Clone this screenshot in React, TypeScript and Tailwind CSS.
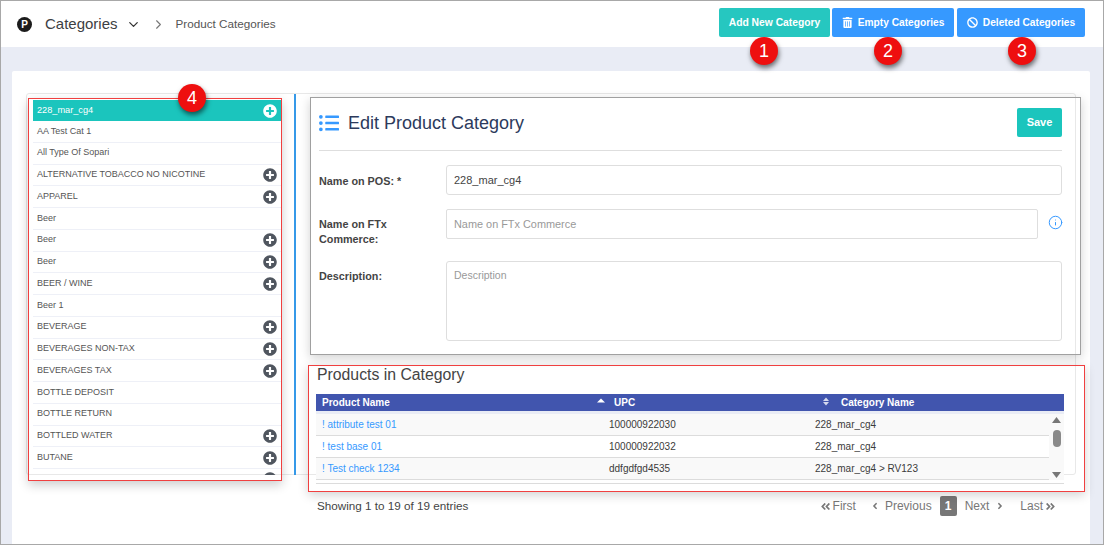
import { ChevronDown, ChevronRight, Info } from "lucide-react";
import { FaAngleDoubleLeft, FaAngleDoubleRight, FaAngleLeft, FaAngleRight, FaBan, FaListUl, FaPlusCircle, FaTrashAlt } from "react-icons/fa";

const cats: [string, boolean][] = [
  ["AA Test Cat 1", false],
  ["All Type Of Sopari", false],
  ["ALTERNATIVE TOBACCO NO NICOTINE", true],
  ["APPAREL", true],
  ["Beer", false],
  ["Beer", true],
  ["Beer", true],
  ["BEER / WINE", true],
  ["Beer 1", false],
  ["BEVERAGE", true],
  ["BEVERAGES NON-TAX", true],
  ["BEVERAGES TAX", true],
  ["BOTTLE DEPOSIT", false],
  ["BOTTLE RETURN", false],
  ["BOTTLED WATER", true],
  ["BUTANE", true],
  ["", true],
];

const rows = [
  ["! attribute test 01", "100000922030", "228_mar_cg4"],
  ["! test base 01", "100000922032", "228_mar_cg4"],
  ["! Test check 1234", "ddfgdfgd4535", "228_mar_cg4 > RV123"],
];

function Badge({ n, className }: { n: string; className: string }) {
  return (
    <div className={`absolute w-[28px] h-[28px] rounded-full bg-[#ee0f0f] text-white text-[18px] leading-[28px] text-center shadow-[1px_3px_5px_rgba(0,0,0,0.55)] ${className}`}>
      {n}
    </div>
  );
}

export default function App() {
  return (
    <div className="relative w-[1104px] h-[545px] overflow-hidden bg-[#e9ecf5] border border-[#a8a8a8] flex flex-col text-[#555] font-[family-name:Liberation_Sans,Arial,sans-serif]">
      {/* header */}
      <header className="h-[46px] shrink-0 bg-white flex items-center pl-[16px] pr-[18px]">
        <div className="w-[15px] h-[15px] rounded-full bg-[#1c1c1c] text-white text-[10px] font-bold leading-[15px] text-center">P</div>
        <span className="ml-[13px] text-[15px] text-[#3d4043]">Categories</span>
        <ChevronDown size={15} strokeWidth={2} className="ml-[8px] text-[#333]" />
        <ChevronRight size={15} strokeWidth={1.8} className="ml-[10px] text-[#777]" />
        <span className="ml-[10px] text-[11.7px] text-[#555]">Product Categories</span>
        <div className="ml-auto flex gap-[2px] -mt-[3px]">
          <button className="h-[29px] w-[111px] rounded-[2px] bg-[#1bc5bd] text-white text-[10.3px] font-bold opacity-95">Add New Category</button>
          <button className="h-[29px] w-[122px] rounded-[2px] bg-[#3699ff] text-white text-[10.2px] font-bold flex items-center justify-center gap-[5px]">
            <FaTrashAlt size={11} />Empty Categories
          </button>
          <button className="ml-[1px] h-[29px] w-[128px] rounded-[2px] bg-[#3699ff] text-white text-[10.2px] font-bold flex items-center justify-center gap-[5px]">
            <FaBan size={11} />Deleted Categories
          </button>
        </div>
      </header>

      {/* card */}
      <main className="mt-[24px] ml-[11px] w-[1078px] flex-1 bg-white rounded-t-[2px] pt-[22px] pl-[14px]">
        <div className="h-[382px] w-[1050px] border border-[#e8e8e8] rounded-[3px] flex">
          {/* category list */}
          <div className="w-[267px] h-[381px] shrink-0 pl-[6px] pt-[6px] overflow-hidden">
            <div className="w-[248px] h-[375px] overflow-hidden text-[9px] text-[#555]">
              <div className="h-[21px] bg-[#1bc5bd] text-white flex items-center justify-between pl-[4px] pr-[4px] text-[9.2px]">
                <span>228_mar_cg4</span>
                <FaPlusCircle size={14} className="text-white" />
              </div>
              {cats.map(([name, plus], i) => (
                <div key={i} className="h-[21.75px] border-b border-[#eef0f7] flex items-center justify-between pl-[4px] pr-[4px]">
                  <span>{name}</span>
                  {plus && <FaPlusCircle size={14} className="text-[#50565f]" />}
                </div>
              ))}
            </div>
          </div>
          <div className="w-[2px] h-[381px] shrink-0 bg-[#3699e8]" />

          {/* right column */}
          <div className="ml-[14px] w-[767px] shrink-0">
            <div className="h-[261px] pl-[9px] pt-[14px] pr-[15px]">
              <div className="flex items-start justify-between h-[43px] border-b border-[#dedede]">
                <div className="flex items-center gap-[9px] h-[30px]">
                  <FaListUl size={20} className="text-[#3699ff]" />
                  <span className="text-[18px] text-[#2c3a5c]">Edit Product Category</span>
                </div>
                <button className="h-[29px] w-[45px] rounded-[2px] bg-[#1bc5bd] text-white text-[11px] font-bold">Save</button>
              </div>
              <div className="mt-[14px] flex">
                <label className="w-[127px] pt-[8px] text-[10.8px] font-bold text-[#444]">Name on POS: *</label>
                <input readOnly value="228_mar_cg4" className="w-[616px] h-[30px] border border-[#dedede] rounded-[3px] px-[7px] text-[11px] text-[#444] outline-none" />
              </div>
              <div className="mt-[14px] h-[38px] flex">
                <label className="w-[127px] shrink-0 pt-[8px] text-[10.8px] leading-[15px] font-bold text-[#444]">Name on FTx<br />Commerce:</label>
                <input readOnly placeholder="Name on FTx Commerce" className="w-[592px] shrink-0 h-[30px] border border-[#dedede] rounded-[2px] px-[7px] text-[10.9px] placeholder:text-[#999] outline-none" />
                <Info size={15} strokeWidth={1.6} className="shrink-0 ml-[10px] mt-[6px] text-[#3699ff]" />
              </div>
              <div className="mt-[14px] flex">
                <label className="w-[127px] pt-[7px] text-[10.8px] font-bold text-[#444]">Description:</label>
                <textarea readOnly placeholder="Description" className="w-[616px] h-[80px] border border-[#dedede] rounded-[3px] px-[7px] py-[6px] text-[10.5px] placeholder:text-[#999] outline-none resize-none" />
              </div>
            </div>

            <h2 className="mt-[10px] ml-[7px] text-[15.8px] leading-[20px] text-[#444]">Products in Category</h2>
            <div className="mt-[9px] ml-[6px] w-[748px]">
              <div className="h-[17px] bg-[#4155ae] text-white text-[10px] font-bold flex items-center">
                <div className="w-[287px] pl-[6px] relative">
                  Product Name
                  <svg width="8" height="5" viewBox="0 0 8 5" className="absolute right-[-2px] top-[3px]"><path d="M0 4.5 4 0.5 8 4.5Z" fill="#fff" /></svg>
                </div>
                <div className="w-[220px] pl-[11px] relative">
                  UPC
                  <svg width="6" height="9" viewBox="0 0 6 9" className="absolute right-[-6px] top-[2px]"><path d="M0 4 3 0.5 6 4Z M0 5 3 8.5 6 5Z" fill="#d5d9ee" /></svg>
                </div>
                <div className="pl-[18px]">Category Name</div>
              </div>
              <div className="relative text-[10px] border-t-[3px] border-[#e9ecf5]">
                {rows.map((r, i) => (
                  <div key={i} className={`h-[22px] flex items-center border-b border-[#dcdcdc] ${i === 1 ? "bg-white pb-[1px]" : i === 0 ? "bg-[#f9f9f9] pb-[1px]" : "bg-[#f9f9f9]"}`}>
                    <div className="w-[293px] pl-[6px] text-[#3699ff]">{r[0]}</div>
                    <div className="w-[206px] pl-[0px] text-[#3b3b3b]">{r[1]}</div>
                    <div className="text-[#3b3b3b]">{r[2]}</div>
                  </div>
                ))}
                <div className="h-[4px] border-b border-[#dcdcdc]" />
                <div className="absolute right-0 top-0 w-[15px] h-[66px] bg-[#f9f9f9] flex flex-col items-center pt-[3px]">
                  <svg width="9" height="6" viewBox="0 0 9 6"><path d="M0 6 4.5 0 9 6Z" fill="#777" /></svg>
                  <div className="mt-[7px] w-[8px] h-[17px] rounded-full bg-[#8a8a8a]" />
                  <svg width="9" height="6" viewBox="0 0 9 6" className="mt-[25px]"><path d="M0 0 4.5 6 9 0Z" fill="#777" /></svg>
                </div>
              </div>
              <div className="mt-[12px] flex items-center justify-between pl-[1px] text-[11.7px]">
                <span className="text-[#444]">Showing 1 to 19 of 19 entries</span>
                <div className="flex items-center text-[12px] text-[#777] mr-[8px]">
                  <span className="flex items-center gap-[2px]"><FaAngleDoubleLeft size={11} />First</span>
                  <span className="ml-[14px] flex items-center gap-[5px]"><FaAngleLeft size={10} />Previous</span>
                  <span className="ml-[8px] w-[17px] h-[20px] rounded-[2px] bg-[#777] text-white font-bold text-center leading-[20px]">1</span>
                  <span className="ml-[8px] flex items-center gap-[6px]">Next<FaAngleRight size={10} /></span>
                  <span className="ml-[15px] flex items-center gap-[2px]">Last<FaAngleDoubleRight size={11} /></span>
                </div>
              </div>
            </div>
          </div>
        </div>
      </main>

      {/* annotations over the screenshot */}
      <div className="absolute left-[27px] top-[97px] w-[254px] h-[383px] border border-[#f04040] shadow-[0_4px_10px_rgba(0,0,0,0.2)]" />
      <div className="absolute left-[309px] top-[96px] w-[771px] h-[258px] border border-[#a0a0a0] shadow-[0_3px_10px_rgba(0,0,0,0.18)]" />
      <div className="absolute left-[307px] top-[364px] w-[777px] h-[127px] border border-[#f04040] shadow-[0_3px_10px_rgba(0,0,0,0.18)]" />
      <Badge n="1" className="left-[749px] top-[36px]" />
      <Badge n="2" className="left-[873px] top-[36px]" />
      <Badge n="3" className="left-[1007px] top-[36px]" />
      <Badge n="4" className="left-[177px] top-[83px]" />
    </div>
  );
}
